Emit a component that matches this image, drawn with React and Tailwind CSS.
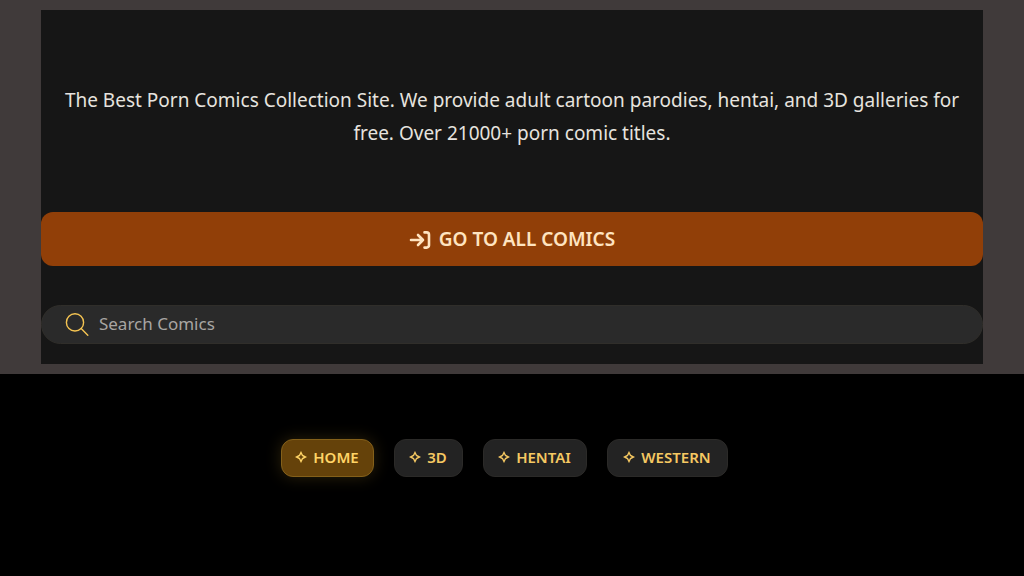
import React, { useState } from 'react';

const navItems = [
  { id: 'home', label: 'HOME', width: 'min-w-[93px]' },
  { id: '3d', label: '3D', width: 'min-w-[69px]' },
  { id: 'hentai', label: 'HENTAI', width: 'min-w-[104px]' },
  { id: 'western', label: 'WESTERN', width: 'min-w-[121px]' },
];

const EnterIcon = () => (
  <svg className="w-[22px] h-[22px] shrink-0" viewBox="0 0 22 22" fill="none" stroke="currentColor" strokeWidth="2.6" strokeLinecap="round" strokeLinejoin="round" aria-hidden="true">
    <path d="M2 12h12M9 7l5 5-5 5" />
    <path d="M15.5 4.4h2.1a2.4 2.4 0 0 1 2.4 2.4v10.4a2.4 2.4 0 0 1-2.4 2.4h-2.1" />
  </svg>
);

const SearchIcon = () => (
  <svg className="w-6 h-6 shrink-0 text-[#f5c452]" viewBox="0 0 24 24" fill="none" stroke="currentColor" strokeWidth="1.4" strokeLinecap="round" aria-hidden="true">
    <circle cx="10" cy="10.4" r="8.6" />
    <path d="M16.2 16.6l6.6 6.6" />
  </svg>
);

const StarIcon = () => (
  <svg className="w-3 h-3 shrink-0" viewBox="0 0 12 12" fill="none" stroke="currentColor" strokeWidth="1.4" strokeLinejoin="miter" aria-hidden="true">
    <path d="M6 1.5L7.5 4.5L10.5 6L7.5 7.5L6 10.5L4.5 7.5L1.5 6L4.5 4.5Z" />
  </svg>
);

const App = () => {
  const [query, setQuery] = useState('');
  const [active, setActive] = useState('home');

  const getLinkColor = (id) =>
    id === active
      ? 'bg-[#65420a] border-[#84601a] text-[#ffd466] shadow-[0_0_16px_rgba(245,190,60,0.18)]'
      : 'bg-[#232323] border-[#2b2a28] text-[#f5c862]';

  return (
    <div className="min-h-screen bg-black font-['Trebuchet_MS','Noto_Sans',sans-serif]">
      <header className="bg-[#403a3a] py-[10px]">
        <div className="w-[92%] mx-auto bg-[#161616] pt-[74px] pb-5">
          <p className="px-3 text-center text-[19px] leading-[33px] text-[#e6e3df]">
            The Best Porn Comics Collection Site. We provide adult cartoon parodies, hentai, and 3D galleries for free. Over 21000+ porn comic titles.
          </p>

          <button
            type="button"
            className="mt-[62px] w-full h-[54px] flex items-center justify-center gap-2 rounded-xl bg-[#913f08] text-[19px] font-semibold text-[#ffe4c0]"
          >
            <EnterIcon />
            GO TO ALL COMICS
          </button>

          {/* Search */}
          <label className="mt-[39px] h-[39px] pl-[23px] pr-6 pb-px flex items-center gap-[10px] rounded-full bg-[#2a2a2a] border border-[#302e2a]">
            <SearchIcon />
            <input
              type="text"
              aria-label="Search Comics"
              placeholder="Search Comics"
              value={query}
              onChange={(e) => setQuery(e.target.value)}
              className="flex-1 min-w-0 bg-transparent text-[17px] text-[#e6e3df] placeholder:text-[#a8a5a2] outline-none"
            />
          </label>
        </div>
      </header>

      {/* Categories */}
      <nav className="mt-[65px] pr-4 flex flex-wrap justify-center gap-5">
        {navItems.map((item) => (
          <a
            key={item.id}
            href={`#${item.id}`}
            onClick={() => setActive(item.id)}
            className={`h-[38px] pb-[2px] flex items-center justify-center gap-[6px] rounded-xl border text-[15px] font-semibold ${item.width} ${getLinkColor(item.id)}`}
          >
            <StarIcon />
            {item.label}
          </a>
        ))}
      </nav>
    </div>
  );
};

export default App;
